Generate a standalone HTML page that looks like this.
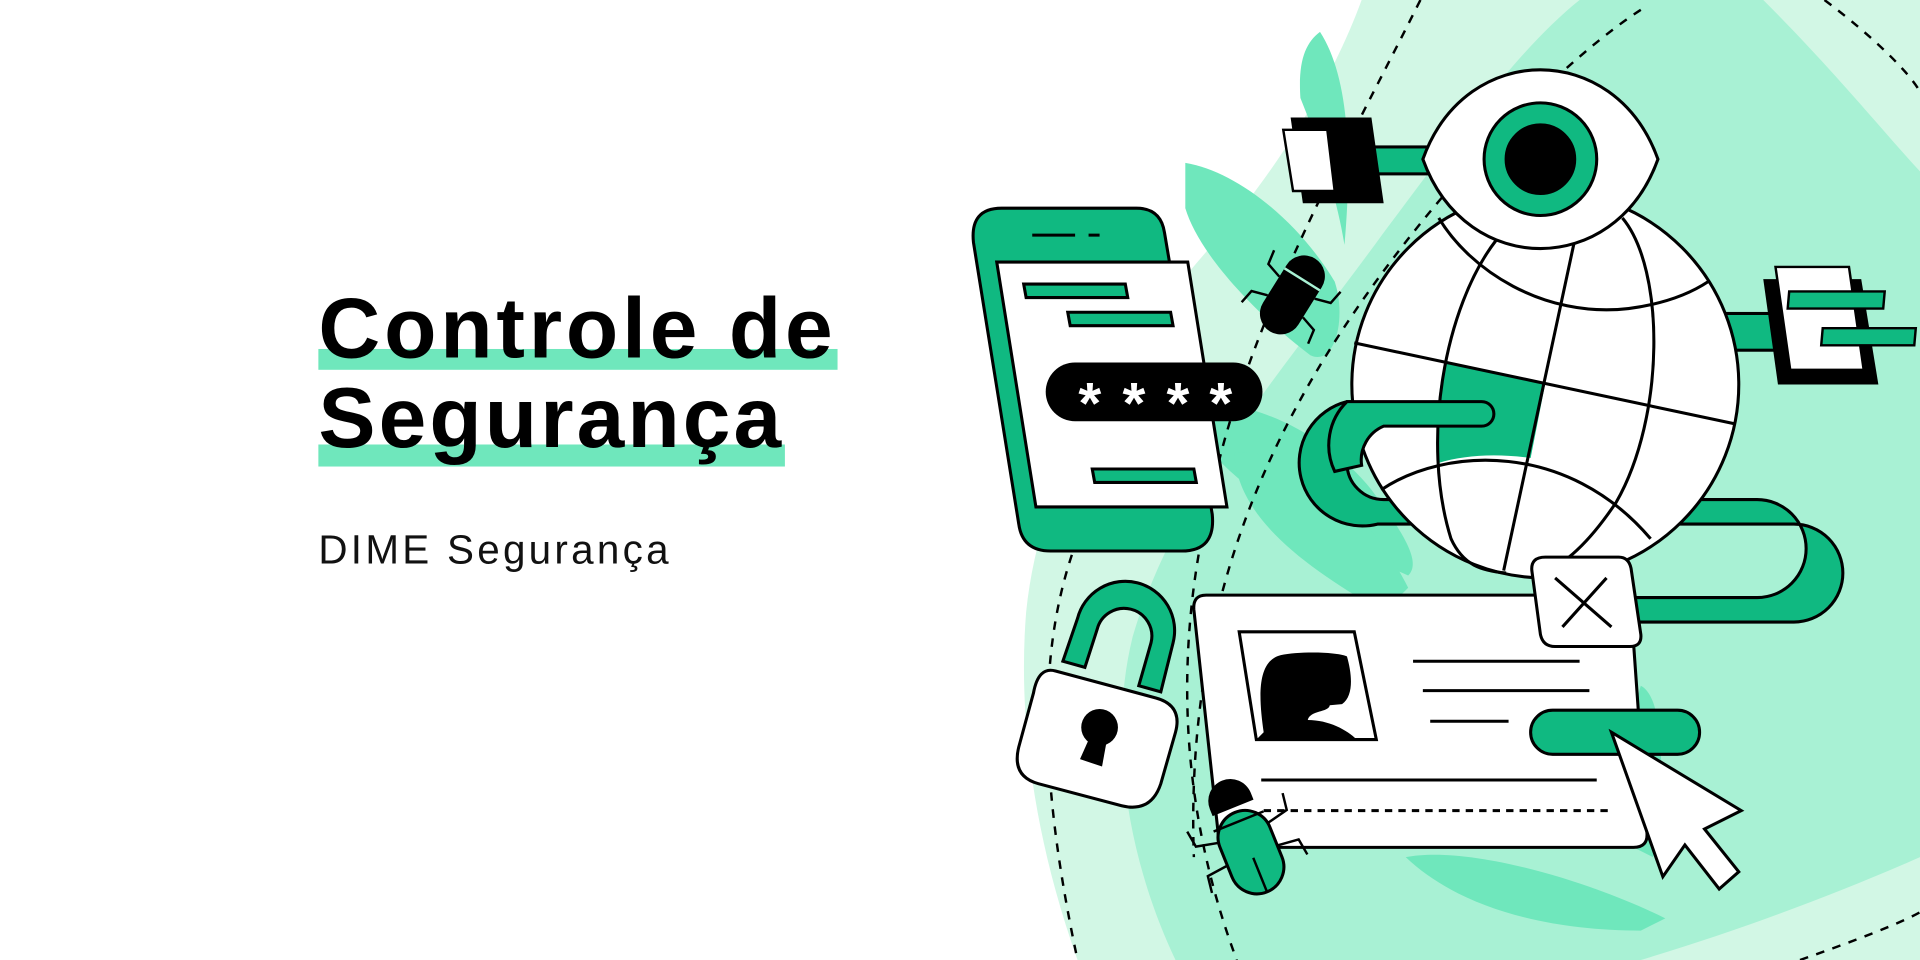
<!DOCTYPE html>
<html><head><meta charset="utf-8"><style>
html,body{margin:0;padding:0;background:#fff;}
svg{display:block}
</style></head><body>
<svg width="1920" height="960" viewBox="0 0 1568 784" xmlns="http://www.w3.org/2000/svg" font-family="Liberation Sans, sans-serif">
<rect width="1568" height="784" fill="#fff"/>
<path d="M1112 0 L1568 0 L1568 784 L880 784 C850 700 830 600 838 500 C850 380 920 280 990 200 C1050 130 1090 60 1112 0Z" fill="#d2f7e5"/>
<path d="M1290 0 L1440 0 C1500 60 1540 110 1568 140 L1568 700 C1500 730 1420 760 1340 784 L960 784 C920 700 905 600 925 520 C960 400 1050 300 1130 190 C1190 110 1240 40 1290 0Z" fill="#a8f1d4"/>
<g fill="#6fe7bc">
<path d="M1078 26 C1100 60 1105 120 1098 200 C1090 150 1070 100 1062 80 C1060 50 1066 35 1078 26Z"/>
<path d="M968 133 C1010 140 1060 180 1090 230 C1100 260 1090 300 1070 290 C1030 260 980 210 968 170Z"/>
<path d="M960 330 C1010 320 1080 350 1120 400 C1150 440 1160 460 1150 470 C1080 440 1000 400 960 330Z"/>
<path d="M1008 370 C1060 365 1120 420 1150 480 L1130 500 C1060 460 1010 420 1008 370Z"/>
<path d="M1148 700 C1200 690 1300 720 1360 750 L1340 760 C1260 760 1190 740 1148 700Z"/>
<path d="M1340 560 C1360 570 1360 640 1350 700 L1330 690 C1330 640 1330 590 1340 560Z"/>
</g>
<g fill="none" stroke="#000" stroke-width="2" stroke-dasharray="7 7">
<path d="M1160 0 C1100 120 1020 260 990 400 C960 520 960 650 1010 784"/>
<path d="M1340 8 C1260 60 1130 200 1060 330 C1000 440 970 560 975 700"/>
<path d="M880 440 C850 520 845 620 880 784"/>
<path d="M1490 0 C1530 30 1560 60 1568 75"/>
<path d="M1470 784 C1510 770 1550 755 1568 745"/>
</g>
<g stroke="#000" stroke-width="2.5" fill="#10b981">
<path d="M1100 328 L1210 328 A10 10 0 0 1 1210 348 L1130 348 A30 30 0 0 0 1130 408 L1435 408 A40 40 0 0 1 1435 488 L1330 488 L1330 508 L1465 508 A40 40 0 0 0 1465 428 L1125 428 A50 50 0 0 1 1100 328Z"/>
<rect x="1120" y="120" width="60" height="22"/>
<rect x="1400" y="256" width="60" height="30"/>
</g>
<g stroke="#000" stroke-width="2.5">
<circle cx="1262" cy="314" r="158" fill="#fff"/>
<path d="M1180 296 L1262 313 L1250 374 C1220 370 1195 372 1175 378 C1172 350 1174 320 1180 296Z" fill="#10b981" stroke="none"/>
<g fill="none">
<path d="M1106 280 L1416 346"/>
<path d="M1286 196 L1228 466"/>
<path d="M1222 196 C1180 250 1160 360 1185 440 C1195 462 1210 466 1230 468"/>
<path d="M1325 178 C1360 220 1360 340 1320 410 C1300 440 1280 460 1260 468"/>
<path d="M1175 178 C1200 220 1260 260 1330 252 C1360 248 1380 240 1395 230"/>
<path d="M1128 400 C1180 365 1280 360 1348 440"/>
</g>
<path d="M1100 328 L1210 328 A10 10 0 0 1 1210 348 L1130 348 A30 30 0 0 0 1112 380 L1090 385 A50 50 0 0 1 1100 328Z" fill="#10b981"/>
</g>
<g stroke="#000" stroke-width="2.5">
<path d="M1162 130 C1180 80 1220 57 1258 57 C1296 57 1336 80 1354 130 C1336 180 1296 203 1258 203 C1220 203 1180 180 1162 130Z" fill="#fff"/>
<circle cx="1258" cy="130" r="46" fill="#10b981"/>
<circle cx="1258" cy="130" r="28" fill="#000"/>
</g>
<path d="M1054 96 L1120 96 L1130 166 L1064 166Z" fill="#000"/>
<path d="M1048 106 L1084 106 L1090 156 L1056 156Z" fill="#fff" stroke="#000" stroke-width="2"/>
<path d="M1440 228 L1520 228 L1534 314 L1452 314Z" fill="#000"/>
<path d="M1450 218 L1510 218 L1522 302 L1462 302Z" fill="#fff" stroke="#000" stroke-width="2"/>
<rect x="1482" y="238" width="78" height="14" fill="#10b981" stroke="#000" stroke-width="2" transform="skewX(-5)"/>
<rect x="1512" y="268" width="76" height="14" fill="#10b981" stroke="#000" stroke-width="2" transform="skewX(-5)"/>
<g stroke="#000" stroke-width="2.5">
<path d="M818 170 L928 170 Q948 170 951 190 L990 420 Q993 450 965 450 L858 450 Q835 450 832 428 L795 198 Q792 170 818 170Z" fill="#10b981"/>
<path d="M814 214 L970 214 L1002 414 L846 414Z" fill="#fff"/>
<path d="M836 232 L919 232 L921 243 L838 243Z" fill="#10b981"/>
<path d="M872 255 L956 255 L958 266 L874 266Z" fill="#10b981"/>
<path d="M892 383 L975 383 L977 394 L894 394Z" fill="#10b981"/>
</g>
<path d="M843 192 L878 192 M889 192 L898 192" stroke="#000" stroke-width="2.5"/>
<rect x="854" y="296" width="177" height="48" rx="24" fill="#000"/>
<g fill="#fff" font-size="48" font-weight="bold" text-anchor="middle">
<text x="890" y="346">*</text><text x="926" y="346">*</text><text x="962" y="346">*</text><text x="997" y="346">*</text>
</g>
<g transform="translate(1056 240) rotate(32)">
<rect x="-17" y="-34" width="34" height="70" rx="17" fill="#000"/>
<path d="M-17 -14 L17 -14" stroke="#a8f1d4" stroke-width="2"/>
<path d="M-17 -6 L-30 -10 L-32 -22 M17 -6 L30 -10 L32 -22 M-17 12 L-30 16 L-32 28 M17 12 L30 16 L32 28" stroke="#000" stroke-width="2" fill="none"/>
</g>
<g stroke="#000" stroke-width="2.5">
<path d="M985 486 L1320 486 Q1330 486 1332 496 L1345 680 Q1346 692 1334 692 L1006 692 Q996 692 995 682 L975 498 Q974 486 985 486Z" fill="#fff"/>
<path d="M1012 516 L1106 516 L1124 604 L1026 604Z" fill="#fff"/>
</g>
<path d="M1032 598 C1028 570 1026 540 1046 535 C1060 532 1090 532 1100 536 C1104 550 1106 568 1096 575 L1086 576 C1085 582 1070 580 1068 588 C1085 588 1100 596 1108 604 L1026 604Z" fill="#000"/>
<g stroke="#000" stroke-width="2.5">
<path d="M1154 540 L1290 540 M1162 564 L1298 564 M1168 589 L1232 589 M1030 637 L1304 637"/>
<path d="M1032 662 L1314 662" stroke-dasharray="6 5"/>
</g>
<rect x="1250" y="580" width="138" height="36" rx="18" fill="#10b981" stroke="#000" stroke-width="2.5"/>
<g stroke="#000" stroke-width="2.5">
<path d="M1262 455 L1322 455 Q1330 455 1332 464 L1340 518 Q1341 528 1331 528 L1270 528 Q1260 528 1258 518 L1251 466 Q1250 455 1262 455Z" fill="#fff"/>
<path d="M1270 472 L1316 512 M1312 472 L1276 512"/>
</g>
<path d="M1316 598 L1422 662 L1392 677 L1420 712 L1404 726 L1376 690 L1358 716Z" fill="#fff" stroke="#000" stroke-width="2.5"/>
<g stroke="#000" stroke-width="2.5">
<path d="M868 540 L880 505 A40 40 0 0 1 958 525 L948 565 L930 560 L940 525 A22 22 0 0 0 896 514 L886 545Z" fill="#10b981"/>
<path d="M862 548 L944 570 Q966 576 960 598 L948 640 Q940 664 916 658 L848 640 Q826 634 832 610 L844 566 Q848 544 862 548Z" fill="#fff"/>
</g>
<circle cx="898" cy="594" r="15" fill="#000"/>
<path d="M890 602 L882 620 L900 626 L904 604Z" fill="#000"/>
<g transform="translate(1016 682) rotate(-22)">
<path d="M-18 -30 A18 18 0 0 1 18 -30 L18 -24 L-18 -24Z" fill="#000"/>
<rect x="-22" y="-20" width="44" height="70" rx="22" fill="#10b981" stroke="#000" stroke-width="2.5"/>
<path d="M-22 -12 L22 -12 M0 20 L0 50" stroke="#000" stroke-width="2"/>
<path d="M-22 -2 L-40 -6 L-42 -20 M22 -2 L40 -6 L42 -20 M-22 18 L-40 20 L-42 34 M22 18 L40 20 L42 34" stroke="#000" stroke-width="2" fill="none"/>
</g>
<rect x="260" y="285" width="424" height="17" fill="#6fe7bc"/>
<rect x="260" y="363" width="381" height="18" fill="#6fe7bc"/>
<text x="260" y="292" font-size="70" font-weight="bold" fill="#000" textLength="420" lengthAdjust="spacing">Controle de</text>
<text x="260" y="365" font-size="70" font-weight="bold" fill="#000" textLength="378" lengthAdjust="spacing">Segurança</text>
<text x="260" y="460" font-size="33" fill="#111" textLength="286" lengthAdjust="spacing">DIME Segurança</text>
</svg>
</body></html>
